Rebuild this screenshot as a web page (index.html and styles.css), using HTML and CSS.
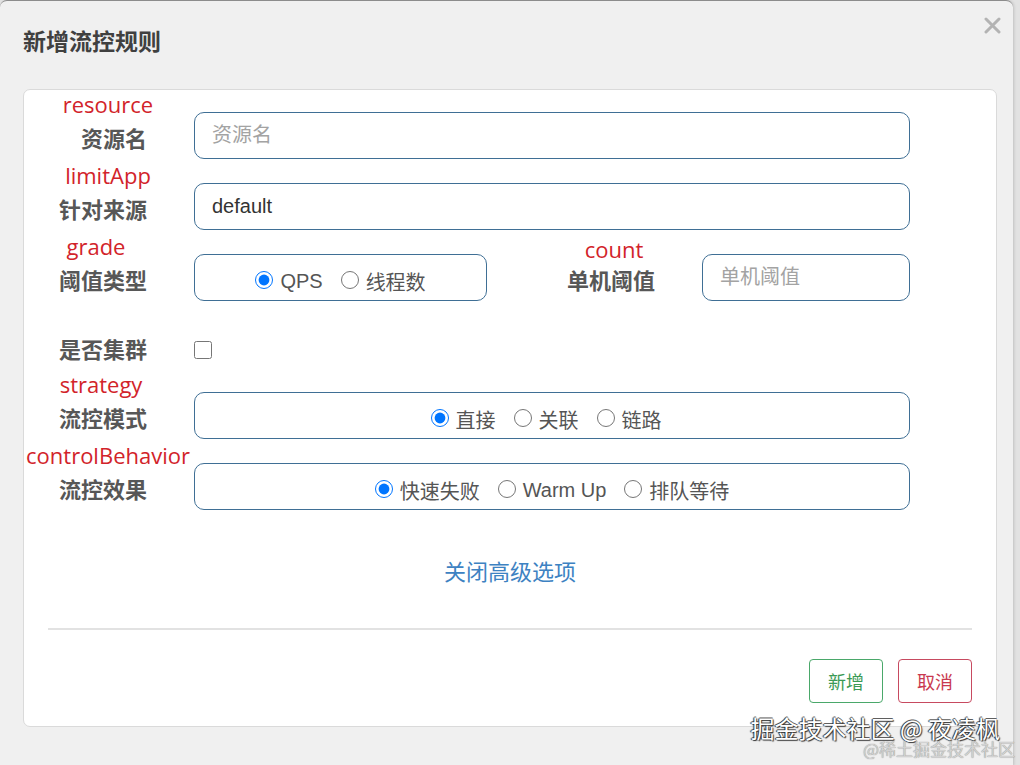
FILE: index.html
```html
<!DOCTYPE html>
<html lang="zh-CN">
<head>
<meta charset="utf-8">
<title>新增流控规则</title>
<link rel="stylesheet" href="styles.css">
</head>
<body>
<div class="modal">
  <div class="header">
    <h3 class="title">新增流控规则</h3>
    <span class="close" aria-label="close">
      <svg width="17" height="17" viewBox="0 0 17 17"><path d="M2 2 L15 15 M15 2 L2 15" stroke="#b3b3b3" stroke-width="3" stroke-linecap="round"/></svg>
    </span>
  </div>
  <div class="panel">
    <div class="form">
      <div class="row">
        <div class="lab"><span class="anno">resource</span><span class="name">资源名</span></div>
        <input class="field" type="text" placeholder="资源名">
      </div>
      <div class="row">
        <div class="lab"><span class="anno">limitApp</span><span class="name">针对来源</span></div>
        <input class="field" type="text" value="default">
      </div>
      <div class="row row-split">
        <div class="lab"><span class="anno anno-grade">grade</span><span class="name">阈值类型</span></div>
        <div class="choice">
          <label class="opt"><input type="radio" name="grade" checked><span>QPS</span></label>
          <label class="opt"><input type="radio" name="grade"><span>线程数</span></label>
        </div>
        <div class="lab"><span class="anno anno-count">count</span><span class="name">单机阈值</span></div>
        <input class="field" type="text" placeholder="单机阈值">
      </div>
      <div class="row row-check">
        <div class="lab"><span class="name">是否集群</span></div>
        <div class="check-cell"><input class="check" type="checkbox"></div>
      </div>
      <div class="row">
        <div class="lab"><span class="anno anno-strategy">strategy</span><span class="name">流控模式</span></div>
        <div class="choice choice-wide">
          <label class="opt"><input type="radio" name="strategy" checked><span>直接</span></label>
          <label class="opt"><input type="radio" name="strategy"><span>关联</span></label>
          <label class="opt"><input type="radio" name="strategy"><span>链路</span></label>
        </div>
      </div>
      <div class="row">
        <div class="lab"><span class="anno">controlBehavior</span><span class="name">流控效果</span></div>
        <div class="choice">
          <label class="opt"><input type="radio" name="behavior" checked><span>快速失败</span></label>
          <label class="opt"><input type="radio" name="behavior"><span>Warm Up</span></label>
          <label class="opt"><input type="radio" name="behavior"><span>排队等待</span></label>
        </div>
      </div>
    </div>
    <div class="toggle"><a class="toggle-link">关闭高级选项</a></div>
    <hr class="divider">
    <div class="footer">
      <button class="btn btn-add" type="button">新增</button>
      <button class="btn btn-cancel" type="button">取消</button>
    </div>
  </div>
</div>
<div class="watermark">
  <span class="wm-main">掘金技术社区 @ 夜凌枫</span>
  <span class="wm-sub">@稀土掘金技术社区</span>
</div>
</body>
</html>
```

FILE: styles.css
```css
* { box-sizing: border-box; }

html, body {
  margin: 0;
  padding: 0;
  height: 100%;
}

body {
  position: relative;
  background: #e2e2e2;
  font-family: "Noto Sans CJK SC", "Liberation Sans", sans-serif;
  overflow: hidden;
}

.modal {
  width: 1013px;
  height: 766px;
  background: #f0f0f0;
  border-top: 1px solid #8c8c8c;
  border-radius: 7px 7px 0 0;
  box-shadow: 1px 0 3px rgba(0,0,0,0.15);
}

.header {
  display: flex;
  justify-content: space-between;
  align-items: flex-start;
  padding: 16px 12px 0 23px;
}

.title {
  margin: 8px 0 0 0;
  font-size: 23px;
  line-height: 30px;
  font-weight: 700;
  color: #404040;
  font-family: "Noto Sans CJK SC", sans-serif;
}

.close {
  display: block;
  width: 17px;
  height: 17px;
}
.close svg { display: block; }

.panel {
  margin: 34px 16px 0 23px;
  background: #fff;
  border: 1px solid #dadada;
  border-radius: 7px;
}

.form {
  display: flex;
  flex-direction: column;
  gap: 4px;
  padding: 2px 86px 0 0;
}

.row {
  display: grid;
  grid-template-columns: 123px 1fr;
  column-gap: 47px;
  align-items: end;
}

.row-split {
  grid-template-columns: 123px 293px 121px 1fr;
}

.row-check {
  align-items: center;
  margin-top: 27px;
}

.lab {
  display: flex;
  flex-direction: column;
  align-items: flex-end;
  margin-bottom: 6px;
}

.row-check .lab {
  margin-bottom: 0;
  padding-bottom: 4px;
}

.anno {
  align-self: flex-start;
  width: 170px;
  margin-left: -1px;
  margin-bottom: 5px;
  text-align: center;
  font-family: "Open Sans", "Liberation Sans", sans-serif;
  font-size: 22px;
  line-height: 24px;
  color: #d2232a;
  white-space: nowrap;
}

.anno-grade { margin-left: -13px; }
.anno-strategy { margin-left: -8px; }
.anno-count {
  margin-left: 30px;
  width: 100px;
  margin-bottom: 2px;
}

.name {
  font-family: "Noto Sans CJK SC", sans-serif;
  font-size: 22px;
  line-height: 32px;
  font-weight: 700;
  color: #575757;
  white-space: nowrap;
}

.field {
  display: block;
  width: 100%;
  height: 47px;
  margin: 0;
  padding: 0 0 0 17px;
  border: 1px solid #3f6f95;
  border-radius: 10px;
  background: #fff;
  font-family: "Liberation Sans", "Noto Sans CJK SC", sans-serif;
  font-size: 20px;
  color: #333;
  outline: none;
}

.field::placeholder {
  color: #a3a3a3;
  font-family: "Noto Sans CJK SC", sans-serif;
}

.choice {
  height: 47px;
  border: 1px solid #3f6f95;
  border-radius: 10px;
  display: flex;
  justify-content: center;
  align-items: center;
  gap: 18px;
  padding-top: 4px;
}

.choice-wide { padding-right: 12px; }

.opt {
  display: flex;
  align-items: center;
  gap: 7px;
  font-family: "Liberation Sans", "Noto Sans CJK SC", sans-serif;
  font-size: 20px;
  color: #555;
  white-space: nowrap;
}

.opt span { position: relative; top: 2px; }

.opt input {
  width: 18px;
  height: 18px;
  margin: 0;
  accent-color: #0075ff;
}

.check-cell {
  display: flex;
  align-items: center;
  height: 34px;
}

.check {
  width: 18px;
  height: 18px;
  margin: 0;
}

.toggle {
  margin-top: 45px;
  text-align: center;
  line-height: 30px;
}

.toggle-link {
  font-family: "Noto Sans CJK SC", sans-serif;
  font-size: 22px;
  color: #3d82c2;
  cursor: pointer;
}

.divider {
  margin: 40px 24px 0;
  border: 0;
  height: 2px;
  background: #e2e2e2;
}

.footer {
  display: flex;
  justify-content: flex-end;
  gap: 15px;
  padding: 29px 24px 23px;
}

.btn {
  width: 74px;
  height: 44px;
  background: #fff;
  border-radius: 4px;
  font-family: "Noto Sans CJK SC", sans-serif;
  font-size: 18px;
  padding: 0;
  cursor: pointer;
}

.btn-add {
  border: 1px solid #4aa86a;
  color: #3b9a55;
}

.btn-cancel {
  border: 1px solid #c74a60;
  color: #c9394f;
}

.watermark {
  position: absolute;
  right: 5px;
  bottom: 8px;
  display: flex;
  flex-direction: column;
  align-items: flex-end;
  font-family: "Noto Sans CJK SC", sans-serif;
}

.wm-main {
  margin: 0 15px 3px 0;
  font-size: 24px;
  line-height: 20px;
  color: #fff;
  text-shadow: -1px 0 1px #222, 1px 1px 1px #333, 0 -1px 0 #666;
  white-space: nowrap;
}

.wm-sub {
  font-size: 17px;
  line-height: 16px;
  color: #d2d2d2;
  text-shadow: 0 0 1px #777;
  white-space: nowrap;
}
```
